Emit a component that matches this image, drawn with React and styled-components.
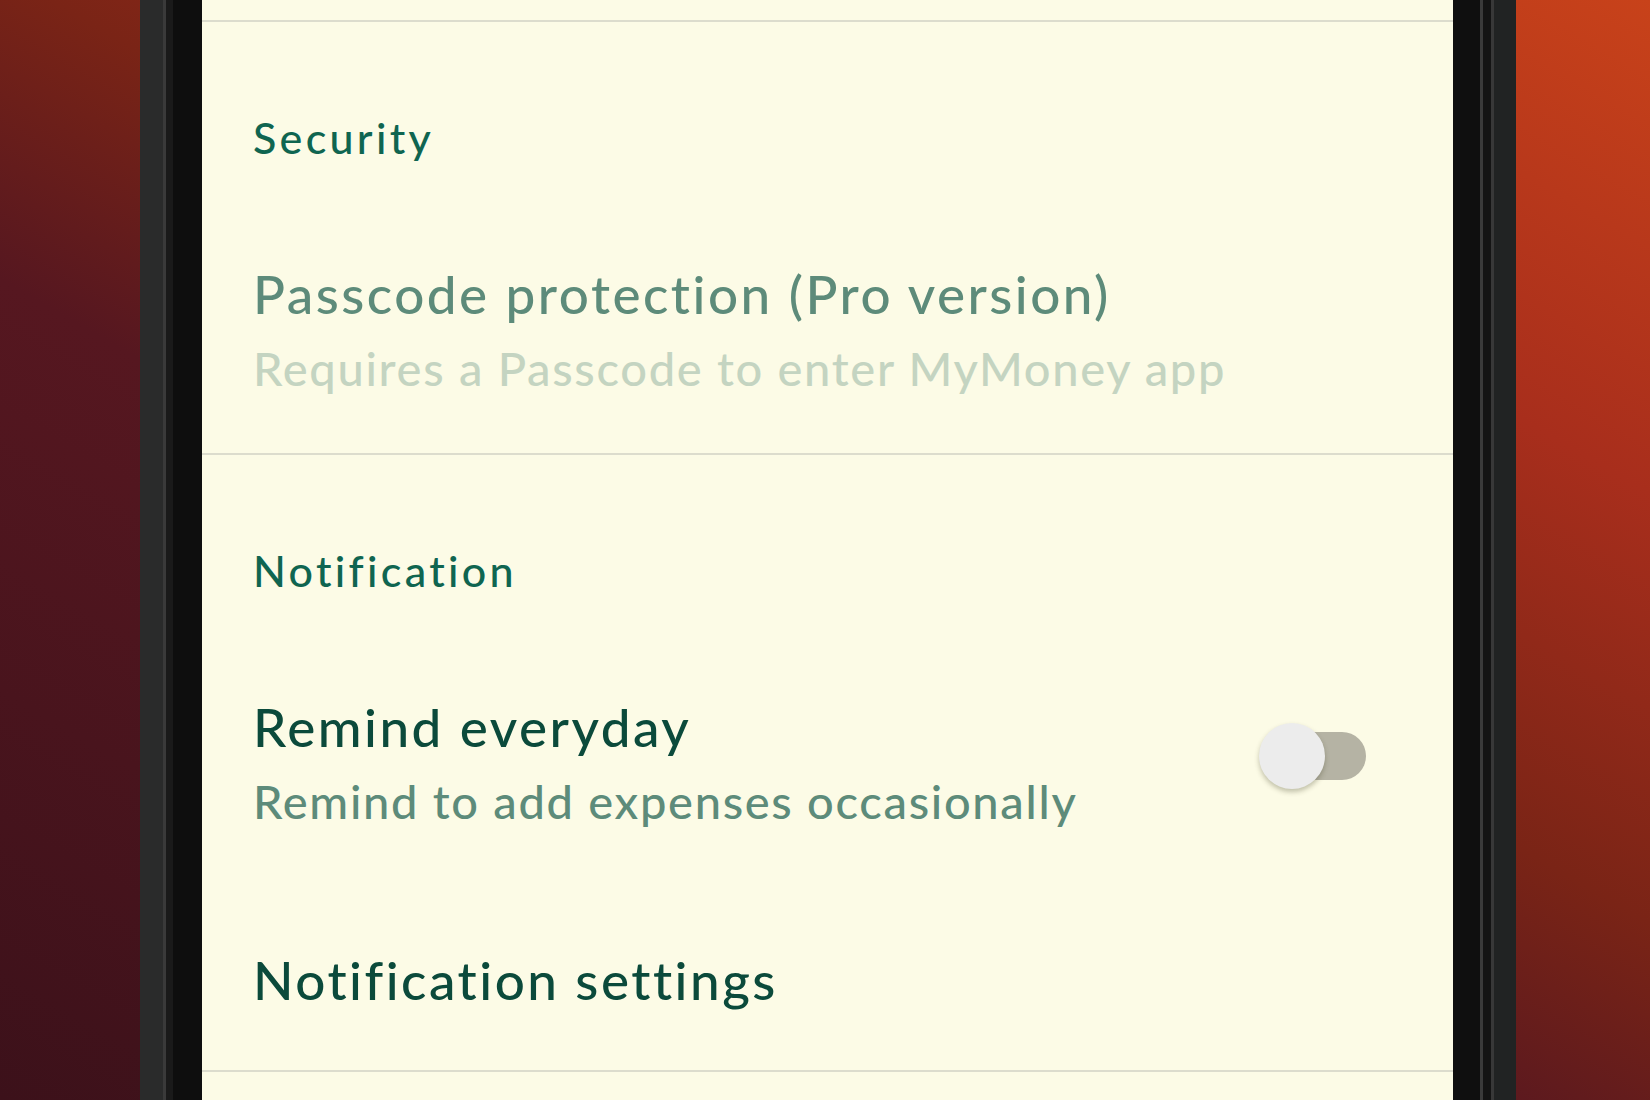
import React from 'react'
import styled, { createGlobalStyle } from 'styled-components'

const GlobalStyle = createGlobalStyle`
  html, body {
    margin: 0;
    padding: 0;
  }
  body {
    font-family: Lato, "Noto Sans", sans-serif;
    font-variant-ligatures: none;
    overflow: hidden;
  }
`;

// backdrop + phone
const Page = styled.div`
  display: flex;
  width: 1650px;
  height: 1100px;
  overflow: hidden;
  background: linear-gradient(30deg, #3c111a 0%, #561720 40%, #7a2416 55%, #a82e1c 76%, #c8421a 100%);
`;

const Phone = styled.div`
  display: flex;
  margin-left: 140px;
  width: 1376px;
  height: 100%;
`;

const Bezel = styled.div`
  width: ${p => (p.$side === 'left' ? 62 : 63)}px;
  flex-shrink: 0;
  background: ${p =>
    p.$side === 'left'
      ? 'linear-gradient(to right, #2a2b2b 0 23px, #3a3a3a 23px 26px, #1a1a1a 26px 33px, #0e0e0e 33px)'
      : 'linear-gradient(to right, #0f0f0f 0 27px, #3a3a3a 27px 30px, #141414 30px 38px, #383838 38px 41px, #212323 41px)'};
`;

const Screen = styled.div`
  flex: 1;
  display: flex;
  flex-direction: column;
  background: #fcfbe6;
  padding-top: 20px;
`;

const Divider = styled.div`
  height: 2px;
  background: #dcdccd;
`;

const SectionHeader = styled.div`
  padding: 86px 0 46px 51px;
  font-size: 43px;
  font-weight: 500;
  line-height: 60px;
  letter-spacing: 3.3px;
  color: #0f6550;
`;

const Item = styled.div`
  display: flex;
  align-items: center;
  padding: ${p => (p.$single ? '62px 87px 58px 51px' : '48px 87px 55px 51px')};
`;

const ItemText = styled.div`
  flex: 1;
  display: flex;
  flex-direction: column;
  gap: 12px;
`;

const Title = styled.div`
  font-size: 53px;
  font-weight: 500;
  line-height: 64px;
  letter-spacing: 2.5px;
  color: ${p => (p.$disabled ? '#5d8b7a' : '#0b4a3b')};
`;

const Summary = styled.div`
  font-size: 47px;
  font-weight: 500;
  line-height: 60px;
  letter-spacing: 1.7px;
  color: ${p => (p.$disabled ? '#c4d4c1' : '#5d8b7a')};
`;

// switch
const Track = styled.div`
  position: relative;
  width: 106px;
  height: 48px;
  margin-bottom: 14px;
  border-radius: 24px;
  background: #b5b3a4;
`;

const Thumb = styled.div`
  position: absolute;
  left: -1px;
  top: -9px;
  width: 66px;
  height: 66px;
  border-radius: 50%;
  background: #ececec;
  box-shadow: 0 3px 5px rgba(60, 60, 30, 0.3);
`;

function Switch() {
  return (
    <Track>
      <Thumb />
    </Track>
  )
}

export default function App() {
  return (
    <Page>
      <GlobalStyle />
      <Phone>
        <Bezel $side="left" />
        <Screen>
          <Divider />
          <SectionHeader>Security</SectionHeader>
          <Item>
            <ItemText>
              <Title $disabled>Passcode protection (Pro version)</Title>
              <Summary $disabled>Requires a Passcode to enter MyMoney app</Summary>
            </ItemText>
          </Item>
          <Divider />
          <SectionHeader>Notification</SectionHeader>
          <Item>
            <ItemText>
              <Title>Remind everyday</Title>
              <Summary>Remind to add expenses occasionally</Summary>
            </ItemText>
            <Switch />
          </Item>
          <Item $single>
            <ItemText>
              <Title>Notification settings</Title>
            </ItemText>
          </Item>
          <Divider />
        </Screen>
        <Bezel $side="right" />
      </Phone>
    </Page>
  )
}
